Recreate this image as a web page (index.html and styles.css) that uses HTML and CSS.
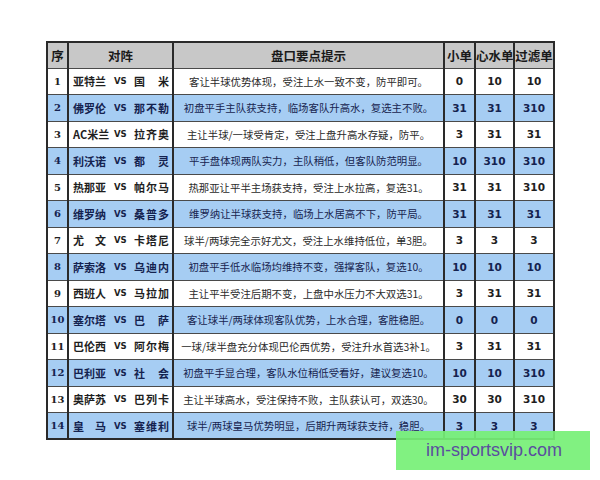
FILE: index.html
```html
<!DOCTYPE html>
<html lang="zh-CN">
<head>
<meta charset="utf-8">
<title>盘口要点提示</title>
<link rel="stylesheet" href="styles.css">
</head>
<body>
<div class="page">
  <table class="odds">
    <colgroup>
      <col class="c-no"><col class="c-match"><col class="c-tip"><col class="c-a"><col class="c-b"><col class="c-c">
    </colgroup>
    <thead>
      <tr><th>序</th><th>对阵</th><th>盘口要点提示</th><th>小单</th><th>心水单</th><th>过滤单</th></tr>
    </thead>
    <tbody>
      <tr><td class="no">1</td><td><div class="m"><span class="h">亚特兰</span><span class="vs">VS</span><span class="a">国米</span></div></td><td class="tip">客让半球优势体现，受注上水一致不变，防平即可。</td><td class="n">0</td><td class="n">10</td><td class="n">10</td></tr>
      <tr class="b"><td class="no">2</td><td><div class="m"><span class="h">佛罗伦</span><span class="vs">VS</span><span class="a">那不勒</span></div></td><td class="tip">初盘平手主队获支持，临场客队升高水，复选主不败。</td><td class="n">31</td><td class="n">31</td><td class="n">310</td></tr>
      <tr><td class="no">3</td><td><div class="m"><span class="h">AC米兰</span><span class="vs">VS</span><span class="a">拉齐奥</span></div></td><td class="tip">主让半球/一球受肯定，受注上盘升高水存疑，防平。</td><td class="n">3</td><td class="n">31</td><td class="n">31</td></tr>
      <tr class="b"><td class="no">4</td><td><div class="m"><span class="h">利沃诺</span><span class="vs">VS</span><span class="a">都灵</span></div></td><td class="tip">平手盘体现两队实力，主队稍低，但客队防范明显。</td><td class="n">10</td><td class="n">310</td><td class="n">310</td></tr>
      <tr><td class="no">5</td><td><div class="m"><span class="h">热那亚</span><span class="vs">VS</span><span class="a">帕尔马</span></div></td><td class="tip">热那亚让平半主场获支持，受注上水拉高，复选31。</td><td class="n">31</td><td class="n">31</td><td class="n">310</td></tr>
      <tr class="b"><td class="no">6</td><td><div class="m"><span class="h">维罗纳</span><span class="vs">VS</span><span class="a">桑普多</span></div></td><td class="tip">维罗纳让半球获支持，临场上水居高不下，防平局。</td><td class="n">31</td><td class="n">31</td><td class="n">31</td></tr>
      <tr><td class="no">7</td><td><div class="m"><span class="h">尤文</span><span class="vs">VS</span><span class="a">卡塔尼</span></div></td><td class="tip">球半/两球完全示好尤文，受注上水维持低位，单3胆。</td><td class="n">3</td><td class="n">3</td><td class="n">3</td></tr>
      <tr class="b"><td class="no">8</td><td><div class="m"><span class="h">萨索洛</span><span class="vs">VS</span><span class="a">乌迪内</span></div></td><td class="tip">初盘平手低水临场均维持不变，强撑客队，复选10。</td><td class="n">10</td><td class="n">10</td><td class="n">10</td></tr>
      <tr><td class="no">9</td><td><div class="m"><span class="h">西班人</span><span class="vs">VS</span><span class="a">马拉加</span></div></td><td class="tip">主让平半受注后期不变，上盘中水压力不大双选31。</td><td class="n">3</td><td class="n">31</td><td class="n">31</td></tr>
      <tr class="b"><td class="no">10</td><td><div class="m"><span class="h">塞尔塔</span><span class="vs">VS</span><span class="a">巴萨</span></div></td><td class="tip">客让球半/两球体现客队优势，上水合理，客胜稳胆。</td><td class="n">0</td><td class="n">0</td><td class="n">0</td></tr>
      <tr><td class="no">11</td><td><div class="m"><span class="h">巴伦西</span><span class="vs">VS</span><span class="a">阿尔梅</span></div></td><td class="tip">一球/球半盘充分体现巴伦西优势，受注升水首选3补1。</td><td class="n">3</td><td class="n">31</td><td class="n">31</td></tr>
      <tr class="b"><td class="no">12</td><td><div class="m"><span class="h">巴利亚</span><span class="vs">VS</span><span class="a">社会</span></div></td><td class="tip">初盘平手显合理，客队水位稍低受看好，建议复选10。</td><td class="n">10</td><td class="n">10</td><td class="n">310</td></tr>
      <tr><td class="no">13</td><td><div class="m"><span class="h">奥萨苏</span><span class="vs">VS</span><span class="a">巴列卡</span></div></td><td class="tip">主让半球高水，受注保持不败，主队获认可，双选30。</td><td class="n">30</td><td class="n">30</td><td class="n">310</td></tr>
      <tr class="b"><td class="no">14</td><td><div class="m"><span class="h">皇马</span><span class="vs">VS</span><span class="a">塞维利</span></div></td><td class="tip">球半/两球皇马优势明显，后期升两球获支持，稳胆。</td><td class="n">3</td><td class="n">3</td><td class="n">3</td></tr>
    </tbody>
  </table>
  <div class="mark">im-sportsvip.com</div>
</div>
</body>
</html>
```
FILE: styles.css
```css
html, body {
  margin: 0;
  padding: 0;
  background: #ffffff;
}
.page {
  position: relative;
  width: 600px;
  height: 480px;
  padding: 41px 0 0 46px;
  box-sizing: border-box;
  font-family: "Noto Sans CJK SC", "Liberation Sans", sans-serif;
  color: #1e1e1e;
}
.odds {
  width: 507px;
  table-layout: fixed;
  border-collapse: collapse;
  border: 2px solid #2a2a2a;
}
.c-no { width: 21px; }
.c-match { width: 105px; }
.c-tip { width: 271px; }
.c-a { width: 31px; }
.c-b { width: 39px; }
.c-c { width: 40px; }
.odds th, .odds td {
  padding: 0;
  border-left: 2px solid #2a2a2a;
  border-right: 2px solid #2a2a2a;
  border-top: 1px solid #4a4a4a;
  border-bottom: 1px solid #4a4a4a;
  text-align: center;
  vertical-align: middle;
  overflow: hidden;
  white-space: nowrap;
}
.odds thead tr {
  height: 26px;
  background: #c8c8c8;
}
.odds th {
  font-size: 12.5px;
  font-weight: 700;
  color: #1a1a1a;
}
.odds tbody tr {
  height: 26.5px;
  background: #ffffff;
}
.odds tbody tr.b {
  background: #a6cdf3;
  color: #14224f;
}
.no {
  font-family: "DejaVu Serif", "Liberation Serif", serif;
  font-size: 10px;
  font-weight: 700;
}
.m {
  display: flex;
  align-items: center;
  padding: 0 3px 0 4px;
  font-size: 11px;
  font-weight: 700;
}
.h, .a {
  display: block;
  flex: none;
  text-align: justify;
  text-align-last: justify;
}
.h {
  width: 33px;
}
.a {
  width: 35px;
  margin-left: auto;
}
.vs {
  flex: none;
  margin-left: 8px;
  font-family: "DejaVu Sans", sans-serif;
  font-size: 8.5px;
  font-weight: 700;
}
.tip {
  font-size: 10.4px;
  color: #2a2a2a;
}
.b .tip {
  color: #17244f;
}
.n {
  font-family: "DejaVu Sans", sans-serif;
  font-size: 10.5px;
  font-weight: 700;
}
.mark {
  position: absolute;
  left: 396px;
  top: 431px;
  width: 194px;
  height: 39px;
  background: rgba(118, 240, 118, 0.92);
  color: #5a4e9e;
  font-family: "Liberation Sans", Arial, sans-serif;
  font-size: 18px;
  line-height: 39px;
  text-align: center;
  padding-left: 2px;
  box-sizing: border-box;
}
```
